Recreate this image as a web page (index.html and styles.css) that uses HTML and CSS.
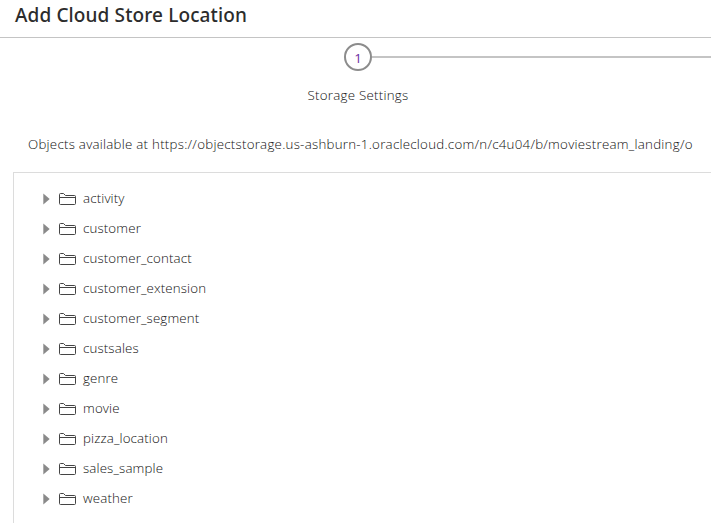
FILE: index.html
```html
<!DOCTYPE html>
<html lang="en">
<head>
<meta charset="utf-8">
<title>Add Cloud Store Location</title>
<link rel="stylesheet" href="styles.css">
</head>
<body>
<svg class="defs" aria-hidden="true">
  <symbol id="arrow" viewBox="0 0 7 12"><path d="M0.3 0.5L6.7 6L0.3 11.5Z" fill="#8a8a8a"/></symbol>
  <symbol id="folder" viewBox="0 0 17 12"><path d="M0.5 10.5V1.5Q0.5 0.5 1.5 0.5H4.5L6.5 2.5H15.5Q16.5 2.5 16.5 3.5V10.5Q16.5 11.5 15.5 11.5H1.5Q0.5 11.5 0.5 10.5ZM0.5 4.5H16.5" fill="none" stroke="#444"/></symbol>
</svg>
<header class="header"><h1 class="title">Add Cloud Store Location</h1></header>
<nav class="train">
  <div class="step-row"><span class="step">1</span><span class="track"></span></div>
  <div class="step-label"><span>Storage Settings</span></div>
</nav>
<p class="source">Objects available at https://objectstorage.us-ashburn-1.oraclecloud.com/n/c4u04/b/moviestream_landing/o</p>
<ul class="tree">
  <li class="node"><svg class="arrow"><use href="#arrow"/></svg><svg class="folder"><use href="#folder"/></svg><span class="name">activity</span></li>
  <li class="node"><svg class="arrow"><use href="#arrow"/></svg><svg class="folder"><use href="#folder"/></svg><span class="name">customer</span></li>
  <li class="node"><svg class="arrow"><use href="#arrow"/></svg><svg class="folder"><use href="#folder"/></svg><span class="name">customer_contact</span></li>
  <li class="node"><svg class="arrow"><use href="#arrow"/></svg><svg class="folder"><use href="#folder"/></svg><span class="name">customer_extension</span></li>
  <li class="node"><svg class="arrow"><use href="#arrow"/></svg><svg class="folder"><use href="#folder"/></svg><span class="name">customer_segment</span></li>
  <li class="node"><svg class="arrow"><use href="#arrow"/></svg><svg class="folder"><use href="#folder"/></svg><span class="name">custsales</span></li>
  <li class="node"><svg class="arrow"><use href="#arrow"/></svg><svg class="folder"><use href="#folder"/></svg><span class="name">genre</span></li>
  <li class="node"><svg class="arrow"><use href="#arrow"/></svg><svg class="folder"><use href="#folder"/></svg><span class="name">movie</span></li>
  <li class="node"><svg class="arrow"><use href="#arrow"/></svg><svg class="folder"><use href="#folder"/></svg><span class="name">pizza_location</span></li>
  <li class="node"><svg class="arrow"><use href="#arrow"/></svg><svg class="folder"><use href="#folder"/></svg><span class="name">sales_sample</span></li>
  <li class="node"><svg class="arrow"><use href="#arrow"/></svg><svg class="folder"><use href="#folder"/></svg><span class="name">weather</span></li>
</ul>
</body>
</html>
```
FILE: styles.css
```css
* { box-sizing: border-box; }
body {
  margin: 0;
  height: 523px;
  overflow: hidden;
  display: flex;
  flex-direction: column;
  background: #fff;
  color: #111;
  font: 300 13.3px/20px "Open Sans", "Noto Sans", sans-serif;
  letter-spacing: 0.255px;
}
.defs { display: none; }
.header {
  flex: none;
  height: 38px;
  padding: 2px 0 0 15px;
  border-bottom: 1px solid #c4c4c4;
}
.title {
  margin: 0;
  font-family: "Noto Sans", "Open Sans", sans-serif;
  font-size: 19px;
  line-height: 26px;
  font-weight: 500;
  letter-spacing: 0.12px;
  color: #2c2c2c;
  white-space: nowrap;
}
.train { flex: none; height: 91px; padding-top: 5px; }
.step-row { display: flex; align-items: center; padding-left: 344px; }
.step {
  width: 28px;
  height: 28px;
  flex: none;
  padding-top: 3px;
  border: 2px solid #8c8c8c;
  border-radius: 50%;
  text-align: center;
  font-weight: 400;
  letter-spacing: 0;
  line-height: 20px;
  color: #6a2ca0;
}
.track { flex: 1; height: 2px; background: #c4c4c4; }
.step-label { width: 716px; margin-top: 14px; text-align: center; }
.source { flex: none; margin: 5px 0 0 28px; height: 38px; white-space: nowrap; }
.tree {
  flex: 1;
  margin: 0 0 0 13px;
  padding: 11px 0 0 29px;
  border: solid #dcdcdc;
  border-width: 1px 0 0 1px;
  list-style: none;
  letter-spacing: 0.14px;
}
.node { display: flex; align-items: center; height: 30px; }
.name { padding-bottom: 2px; }
.arrow { width: 7px; height: 12px; margin-right: 9px; }
.folder { width: 17px; height: 12px; margin-right: 7px; }
```
